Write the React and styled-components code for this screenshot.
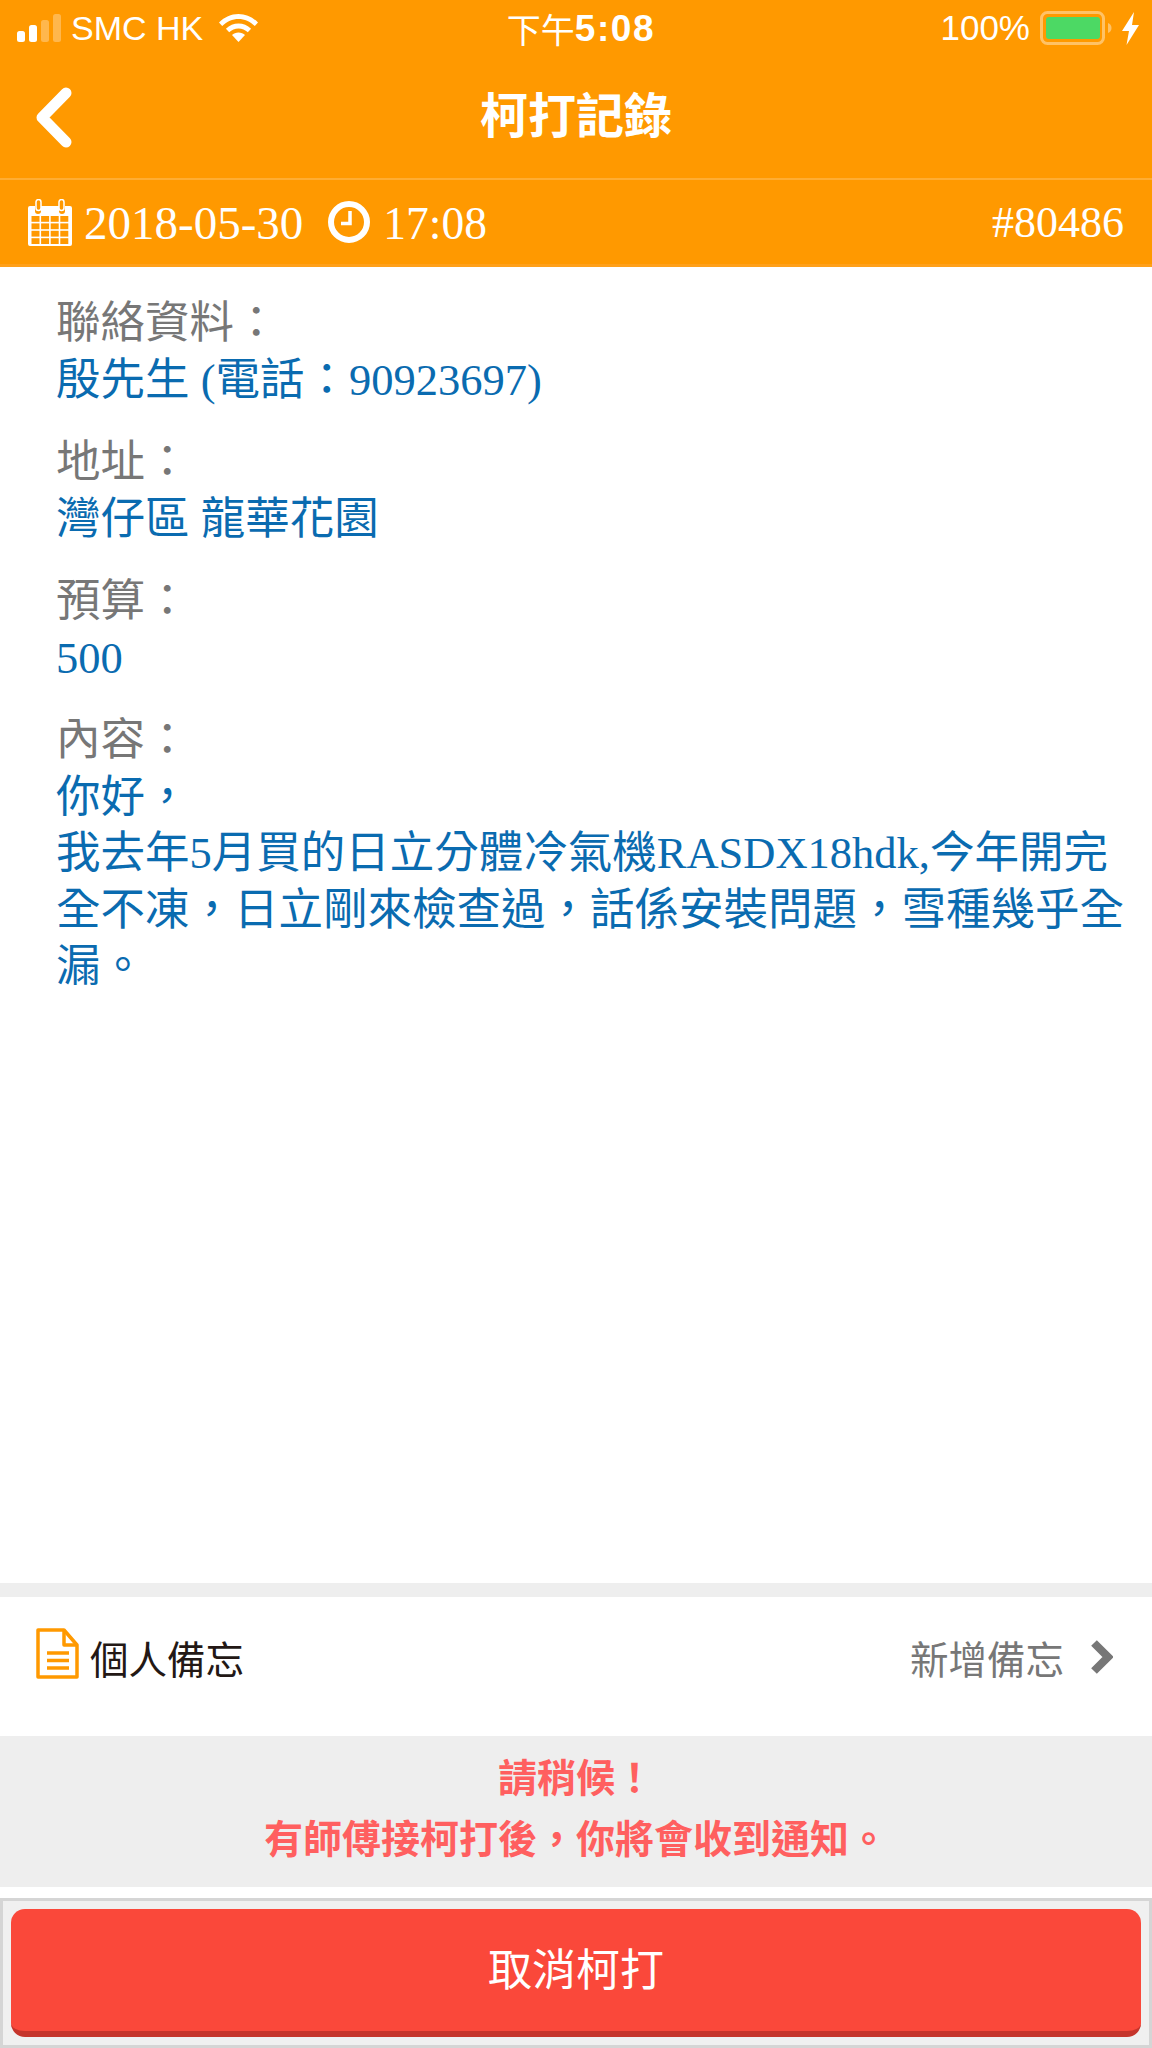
import React from "react";
import styled, { createGlobalStyle } from "styled-components";

const Global = createGlobalStyle`
  html, body { margin: 0; padding: 0; background: #fff; }
  * { box-sizing: border-box; }
`;

const SERIF = `"Liberation Serif", "Noto Sans CJK TC", serif`;
const SANS = `"Liberation Sans", "Noto Sans CJK TC", sans-serif`;

const Page = styled.div`
  width: 1152px;
  height: 2048px;
  display: flex;
  flex-direction: column;
  background: #fff;
  font-family: ${SERIF};
  overflow: hidden;
`;
const Header = styled.header`
  background: #ff9900;
  color: #fff;
  flex: none;
`;
const StatusBar = styled.div`
  height: 56px;
  padding: 0 13px 0 17px;
  display: grid;
  grid-template-columns: 1fr auto 1fr;
  align-items: center;
  font-family: ${SANS};
  font-size: 34px;
`;
const StatusLeft = styled.div`
  display: flex;
  align-items: center;
  gap: 10px;
`;
const Carrier = styled.span`
  margin-right: 6px;
  line-height: 1;
`;
const StatusClock = styled.div`
  padding-left: 6px;
  display: flex;
  align-items: center;
  b { font-weight: 700; font-size: 37px; letter-spacing: 1.6px; padding-top: 1px; }
`;
const StatusRight = styled.div`
  display: flex;
  align-items: center;
  justify-content: flex-end;
  gap: 10px;
  font-size: 35px;
`;
const Nav = styled.div`
  height: 122px;
  position: relative;
  display: flex;
  align-items: center;
  justify-content: center;
  border-bottom: 2px solid rgba(255, 255, 255, 0.2);
  box-sizing: content-box;
`;
const BackIcon = styled.svg`
  position: absolute;
  left: 36px;
  top: 31px;
`;
const Title = styled.h1`
  margin: 0;
  font-family: ${SANS};
  font-size: 48px;
  font-weight: 700;
  line-height: 1;
`;
const InfoBar = styled.div`
  height: 87px;
  padding: 0 28px;
  display: flex;
  align-items: center;
  font-size: 47px;
  border-bottom: 3px solid #ffa01a;
`;
const InfoGroup = styled.div`
  display: flex;
  align-items: center;
  flex: 1;
`;
const DateText = styled.span`
  margin-left: 12px;
  margin-right: 25px;
  padding-top: 2px;
`;
const TimeText = styled.span`
  margin-left: 13px;
  padding-top: 2px;
  font-size: 45.5px;
`;
const OrderNo = styled.span`
  font-size: 44px;
`;
const Body = styled.main`
  flex: 1;
  padding: 0 16px 0 56px;
  min-height: 0;
`;
const Section = styled.section`
  padding-top: 26px;
  font-size: 44.5px;
  line-height: 56.5px;
  &:first-child { padding-top: 28px; }
`;
const Label = styled.div`
  color: #777;
`;
const Value = styled.div`
  color: #0a6bb0;
`;
const Divider = styled.div`
  height: 14px;
  background: #eee;
  flex: none;
`;
const MemoRow = styled.div`
  height: 139px;
  padding: 0 39px 20px 36px;
  display: flex;
  align-items: center;
  justify-content: space-between;
  font-family: ${SANS};
  font-size: 38.5px;
  flex: none;
`;
const MemoLeft = styled.div`
  display: flex;
  align-items: center;
  gap: 11px;
  color: #231815;
  svg { margin-top: -7px; }
`;
const MemoRight = styled.div`
  display: flex;
  align-items: center;
  gap: 25px;
  color: #777;
`;
const Notice = styled.div`
  height: 151px;
  padding-top: 12px;
  background: #eee;
  color: #ff5f5f;
  font-family: ${SANS};
  font-size: 39px;
  font-weight: 700;
  line-height: 61px;
  text-align: center;
  flex: none;
`;
const Gap = styled.div`
  height: 11px;
  flex: none;
`;
const Footer = styled.footer`
  height: 150px;
  padding: 8px 8px 8px;
  background: #f0f0f0;
  border: 3px solid #d5d5d5;
  flex: none;
`;
const CancelButton = styled.button`
  width: 100%;
  height: 128px;
  padding: 0 0 6px;
  border: 0;
  border-bottom: 6px solid #c5352c;
  border-radius: 14px;
  background: #fa483a;
  color: #fff;
  font-family: ${SANS};
  font-size: 44px;
`;

const Signal = () => (
  <svg width="44" height="28" viewBox="0 0 44 28">
    <rect x="0" y="17" width="8" height="11" rx="2.5" fill="#fff" />
    <rect x="12" y="11" width="8" height="17" rx="2.5" fill="#fff" />
    <rect x="24" y="6" width="8" height="22" rx="2.5" fill="#fff" opacity=".3" />
    <rect x="36" y="0" width="8" height="28" rx="2.5" fill="#fff" opacity=".3" />
  </svg>
);
const Wifi = () => (
  <svg width="39" height="28" viewBox="0 0 39 28">
    <path d="M19.5 0C12 0 5.5 3 0 8.5l3.2 3.6C8 7.6 13.5 5 19.5 5s11.5 2.6 16.3 7.1L39 8.5C33.5 3 27 0 19.5 0z" fill="#fff" />
    <path d="M19.5 9.500c-4.700 0-9 1.900-12.600 5.200l3.300 3.500c2.500-2.300 5.800-3.700 9.300-3.700s6.800 1.400 9.300 3.700l3.300-3.500c-3.600-3.300-7.900-5.200-12.600-5.200z" fill="#fff" />
    <path d="M19.5 18.500c-2.600 0-4.900 1-6.500 2.600L19.5 28l6.500-6.900c-1.600-1.600-3.900-2.600-6.500-2.600z" fill="#fff" />
  </svg>
);
const Battery = () => (
  <svg width="72" height="34" viewBox="0 0 72 34">
    <rect x="1.5" y="1.5" width="62" height="31" rx="6" fill="none" stroke="#fff" strokeOpacity=".4" strokeWidth="3" />
    <rect x="6" y="6" width="54" height="22" rx="3" fill="#4cd964" />
    <path d="M68 12c2 .5 3.5 2.500 3.5 5s-1.500 4.500-3.500 5z" fill="#fff" fillOpacity=".4" />
  </svg>
);
const Bolt = () => (
  <svg width="17" height="33" viewBox="0 0 17 33">
    <path d="M12 0L0 19h7L4.500 33 17 13h-7z" fill="#fff" />
  </svg>
);
const BackChevron = () => (
  <BackIcon width="37" height="61" viewBox="0 0 37 61">
    <path d="M30 6L6 30.5 30 55" fill="none" stroke="#fff" strokeWidth="11" strokeLinecap="round" strokeLinejoin="round" />
  </BackIcon>
);
const Calendar = () => (
  <svg width="44" height="47" viewBox="0 0 44 47" fill="none">
    <path d="M2 7h5v5a3 3 0 0 0 6 0V7h18v5a3 3 0 0 0 6 0V7h5a2 2 0 0 1 2 2v36a2 2 0 0 1-2 2H2a2 2 0 0 1-2-2V9a2 2 0 0 1 2-2z" fill="#fff" />
    <rect x="8" y="0.5" width="5" height="11" rx="2.5" fill="#ff9900" stroke="#fff" strokeWidth="1.5" />
    <rect x="31" y="0.5" width="5" height="11" rx="2.5" fill="#ff9900" stroke="#fff" strokeWidth="1.5" />
    {[0, 1, 2, 3].map((r) =>
      [0, 1, 2, 3].map((c) => (
        <rect key={`${r}-${c}`} x={3.5 + c * 9.6} y={17 + r * 7.4} width="8" height="5.8" fill="#ff9900" />
      ))
    )}
  </svg>
);
const Clock = () => (
  <svg width="42" height="42" viewBox="0 0 42 42" fill="none">
    <circle cx="21" cy="21" r="18" stroke="#fff" strokeWidth="6" />
    <path d="M22 10v12.5H13" stroke="#fff" strokeWidth="3.5" />
  </svg>
);
const FileIcon = () => (
  <svg width="43" height="51" viewBox="0 0 43 51" fill="none">
    <path d="M2 2h26l13 15v32H2z" stroke="#ff9900" strokeWidth="3.5" strokeLinejoin="round" />
    <path d="M28 2v15h13" stroke="#ff9900" strokeWidth="3.5" strokeLinejoin="round" />
    <path d="M11 25h22M11 32.5h22M11 40h22" stroke="#ff9900" strokeWidth="3.5" />
  </svg>
);
const ChevronRight = () => (
  <svg width="24" height="36" viewBox="0 0 24 36" fill="none">
    <path d="M5 4l14 14L5 32" stroke="#777" strokeWidth="8" strokeLinejoin="miter" />
  </svg>
);

export default function App() {
  return (
    <Page lang="zh-Hant">
      <Global />
      <Header>
        <StatusBar>
          <StatusLeft>
            <Signal />
            <Carrier>SMC HK</Carrier>
            <Wifi />
          </StatusLeft>
          <StatusClock>
            下午<b>5:08</b>
          </StatusClock>
          <StatusRight>
            <span>100%</span>
            <Battery />
            <Bolt />
          </StatusRight>
        </StatusBar>
        <Nav>
          <BackChevron />
          <Title>柯打記錄</Title>
        </Nav>
        <InfoBar>
          <InfoGroup>
            <Calendar />
            <DateText>2018-05-30</DateText>
            <Clock />
            <TimeText>17:08</TimeText>
          </InfoGroup>
          <OrderNo>#80486</OrderNo>
        </InfoBar>
      </Header>
      <Body>
        <Section>
          <Label>聯絡資料：</Label>
          <Value>殷先生 (電話：90923697)</Value>
        </Section>
        <Section>
          <Label>地址：</Label>
          <Value>灣仔區 龍華花園</Value>
        </Section>
        <Section>
          <Label>預算：</Label>
          <Value>500</Value>
        </Section>
        <Section>
          <Label>內容：</Label>
          <Value>
            你好，
            <br />
            我去年5月買的日立分體冷氣機RASDX18hdk,今年開完全不凍，日立剛來檢查過，話係安裝問題，雪種幾乎全漏。
          </Value>
        </Section>
      </Body>
      <Divider />
      <MemoRow>
        <MemoLeft>
          <FileIcon />
          個人備忘
        </MemoLeft>
        <MemoRight>
          新增備忘
          <ChevronRight />
        </MemoRight>
      </MemoRow>
      <Notice>
        請稍候！
        <br />
        有師傅接柯打後，你將會收到通知。
      </Notice>
      <Gap />
      <Footer>
        <CancelButton>取消柯打</CancelButton>
      </Footer>
    </Page>
  );
}
